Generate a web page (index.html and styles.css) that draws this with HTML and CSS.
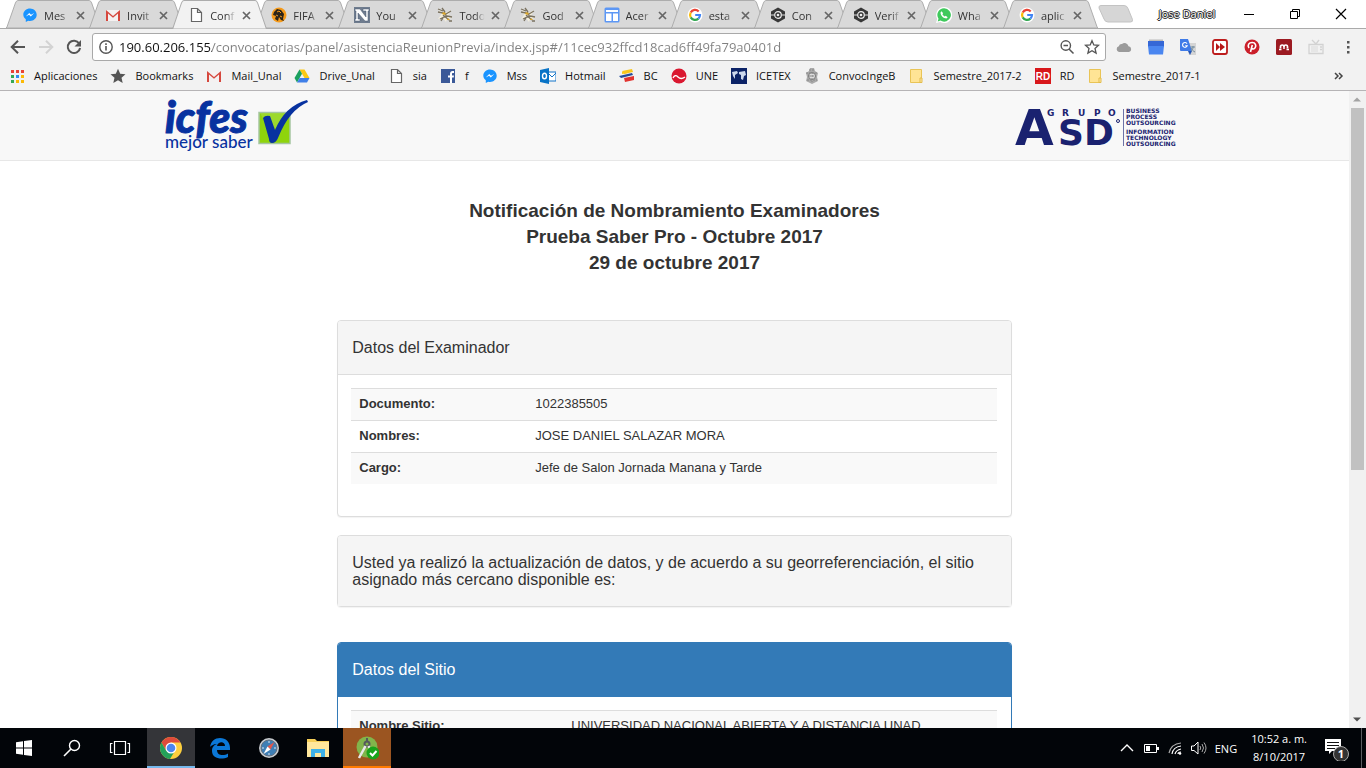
FILE: index.html
```html
<!DOCTYPE html>
<html lang="es">
<head>
<meta charset="utf-8">
<title>Notificación de Nombramiento Examinadores</title>
<link rel="stylesheet" href="styles.css">
</head>
<body>
<svg class="defs" aria-hidden="true">
  <symbol id="tab" viewBox="0 0 96 28" preserveAspectRatio="none"><path d="M0 28 L1 27 L9.500 3 Q10.500 .5 12 .5 H84 Q85.500 .5 86.500 3 L95 27 L96 28z"/></symbol>
  <symbol id="x" viewBox="0 0 9 9"><path d="M1 1l7 7M8 1L1 8" stroke="#666" stroke-width="1.700"/></symbol>
  <symbol id="msg" viewBox="0 0 16 16"><path d="M8 1.500C4.300 1.500 1.300 4.200 1.300 7.600c0 1.900 1 3.600 2.500 4.700V15l2.400-1.300c.6.1 1.200.2 1.800.2 3.700 0 6.700-2.800 6.700-6.200S11.700 1.500 8 1.500z" fill="#1a94ff"/><path d="M3.800 9.500L7.200 6l1.800 1.800L12.200 6 8.800 9.600 7 7.800z" fill="#fff"/></symbol>
  <symbol id="gmail" viewBox="0 0 16 16"><path d="M1 3h14v11H1z" fill="#f4f1f1"/><path d="M1 14V3l7 6 7-6v11h-2V6.500l-5 4.300-5-4.300V14z" fill="#d6483e"/></symbol>
  <symbol id="page" viewBox="0 0 16 16"><path d="M3.500 1.500h6l4 4v9h-10zM9.500 1.500v4h4" fill="#fff" stroke="#666" stroke-width="1.200"/></symbol>
  <symbol id="google" viewBox="0 0 16 16"><circle cx="8" cy="8" r="7.500" fill="#fff"/><g fill="none" stroke-width="2.200"><path d="M3.700 5.600A5 5 0 0 1 11.700 4.400" stroke="#ea4335"/><path d="M3.700 5.600a5 5 0 0 0 0 4.800" stroke="#fbbc05"/><path d="M3.700 10.400a5 5 0 0 0 7.700 1.200" stroke="#34a853"/><path d="M11.400 11.600A5 5 0 0 0 13 8H8.200" stroke="#4285f4"/></g></symbol>
  <symbol id="bee" viewBox="0 0 16 16"><path d="M1 1l6 6 7-4-3 6 4 2-5 1-1 3-3-4-5 1 3-4z" fill="#f3eedd"/><path d="M1 2l5 2M1 5l5 1M5 1l3 4M14 4L9 7M6 8l6 5M3 12l6-3M10 9l5 1M7 5l3 5M4 14l2-3M12 14h3" stroke="#7a7260" stroke-width="1.300"/><path d="M6 5l3 1-1 2-3-1zM11 11l2 2h-3z" fill="#d9a62d"/></symbol>
  <symbol id="hex" viewBox="0 0 16 16"><path d="M8 .5l7 4v7l-7 4-7-4v-7z" fill="#383838"/><circle cx="8" cy="8" r="3.300" fill="none" stroke="#eee" stroke-width="1.200"/><circle cx="8" cy="8" r="1.300" fill="#eee"/><path d="M1 8h4M11 8h4" stroke="#ddd"/></symbol>
  <symbol id="folder" viewBox="0 0 16 16"><path d="M2.500 1.500h11v13h-11z" fill="#ffe495" stroke="#e9c456"/><path d="M12 10h2v4.500h-2z" fill="#ffe8a5" stroke="#e2bb4b"/></symbol>
</svg>

<header class="browser">
  <div class="tabstrip">
    <div class="tabs">
      <div class="tab"><svg class="shape"><use href="#tab"/></svg><svg class="ico"><use href="#msg"/></svg><button class="label">Mes</button><button class="close" aria-label="Cerrar"><svg><use href="#x"/></svg></button></div>
      <div class="tab"><svg class="shape"><use href="#tab"/></svg><svg class="ico"><use href="#gmail"/></svg><button class="label">Invit</button><button class="close" aria-label="Cerrar"><svg><use href="#x"/></svg></button></div>
      <div class="tab active"><svg class="shape"><use href="#tab"/></svg><svg class="ico"><use href="#page"/></svg><button class="label">Conf</button><button class="close" aria-label="Cerrar"><svg><use href="#x"/></svg></button></div>
      <div class="tab"><svg class="shape"><use href="#tab"/></svg><svg class="ico" viewBox="0 0 16 16"><circle cx="8" cy="8" r="7.500" fill="#f59b1c"/><path d="M3 5l3-3 4 1 3 4-1 5 1 2-3-1-2-3-1 4-3-2 1-3-3-1z" fill="#2d2418"/><path d="M6 5l2-1 2 2M9 9l2 1M5 8l2 1" stroke="#f59b1c" fill="none"/></svg><button class="label">FIFA</button><button class="close" aria-label="Cerrar"><svg><use href="#x"/></svg></button></div>
      <div class="tab"><svg class="shape"><use href="#tab"/></svg><svg class="ico" viewBox="0 0 16 16"><path d="M0 0h16v16H0z" fill="#6f7c8e"/><path d="M1 2h5l6 8V4H9V2h6v2h-1v10h-3L4 6v6h2v2H1v-2h1V4H1z" fill="#fff" stroke="#4b5870" stroke-width=".5"/></svg><button class="label">You</button><button class="close" aria-label="Cerrar"><svg><use href="#x"/></svg></button></div>
      <div class="tab"><svg class="shape"><use href="#tab"/></svg><svg class="ico"><use href="#bee"/></svg><button class="label">Todo</button><button class="close" aria-label="Cerrar"><svg><use href="#x"/></svg></button></div>
      <div class="tab"><svg class="shape"><use href="#tab"/></svg><svg class="ico"><use href="#bee"/></svg><button class="label">God</button><button class="close" aria-label="Cerrar"><svg><use href="#x"/></svg></button></div>
      <div class="tab"><svg class="shape"><use href="#tab"/></svg><svg class="ico" viewBox="0 0 16 16"><rect x=".5" y=".5" width="15" height="15" rx="1.500" fill="#5c97f5"/><path d="M2 3h12v2H2zM2 6.500h5.500V14H2zM9 6.500h5V14H9z" fill="#fff"/></svg><button class="label">Acer</button><button class="close" aria-label="Cerrar"><svg><use href="#x"/></svg></button></div>
      <div class="tab"><svg class="shape"><use href="#tab"/></svg><svg class="ico"><use href="#google"/></svg><button class="label">esta</button><button class="close" aria-label="Cerrar"><svg><use href="#x"/></svg></button></div>
      <div class="tab"><svg class="shape"><use href="#tab"/></svg><svg class="ico"><use href="#hex"/></svg><button class="label">Con</button><button class="close" aria-label="Cerrar"><svg><use href="#x"/></svg></button></div>
      <div class="tab"><svg class="shape"><use href="#tab"/></svg><svg class="ico"><use href="#hex"/></svg><button class="label">Verif</button><button class="close" aria-label="Cerrar"><svg><use href="#x"/></svg></button></div>
      <div class="tab"><svg class="shape"><use href="#tab"/></svg><svg class="ico" viewBox="0 0 16 16"><path d="M8 0a8 8 0 0 0-6.800 12L0 16l4.200-1.100A8 8 0 1 0 8 0z" fill="#fff"/><path d="M8 1.300a6.700 6.700 0 0 0-5.500 10.400l-.8 2.700 2.800-.8A6.700 6.700 0 1 0 8 1.300z" fill="#3fc95c"/><path d="M5.600 4.200L4.500 5.500c0 3 3 6 6 6l1.200-1.200-2-1.500-1 .8C7.600 9 7 8.200 6.400 7.200l.7-.9z" fill="#fff"/></svg><button class="label">Wha</button><button class="close" aria-label="Cerrar"><svg><use href="#x"/></svg></button></div>
      <div class="tab"><svg class="shape"><use href="#tab"/></svg><svg class="ico"><use href="#google"/></svg><button class="label">aplic</button><button class="close" aria-label="Cerrar"><svg><use href="#x"/></svg></button></div>
    </div>
    <button class="newtab" aria-label="Nueva pestaña"><svg viewBox="0 0 36 18"><path d="M3 .5h23q3 0 4 3l4.500 11q.5 2.500-2 2.500H10q-3 0-4-3L1 3Q.5.500 3 .5z" fill="#d6d6d6" stroke="#c3c3c3"/></svg></button>
    <div class="window">
      <button class="profile">Jose Daniel</button>
      <button aria-label="Minimizar"><svg viewBox="0 0 12 12"><path d="M1 6.500h10" stroke="#000"/></svg></button>
      <button aria-label="Restaurar"><svg viewBox="0 0 12 12"><path d="M1.500 3.500h7v7h-7zM3.500 3.500v-2h7v7h-2" fill="none" stroke="#000"/></svg></button>
      <button aria-label="Cerrar ventana"><svg viewBox="0 0 12 12"><path d="M1 1l10 10M11 1L1 11" stroke="#000" stroke-width="1.200"/></svg></button>
    </div>
  </div>

  <div class="toolbar">
    <button aria-label="Atrás"><svg viewBox="0 0 16 16"><path d="M15 8H2M8 1.700L1.700 8 8 14.300" fill="none" stroke="#555" stroke-width="2"/></svg></button>
    <button aria-label="Adelante"><svg viewBox="0 0 16 16"><path d="M1 8h13M8 1.700L14.300 8 8 14.300" fill="none" stroke="#d3d3d3" stroke-width="2"/></svg></button>
    <button aria-label="Recargar"><svg viewBox="0 0 16 16"><path d="M13.200 4.500A6.200 6.200 0 1 0 14.100 9" fill="none" stroke="#555" stroke-width="2"/><path d="M15 1v6.500H8.500z" fill="#555"/></svg></button>
    <div class="omnibox">
      <svg viewBox="0 0 16 16"><circle cx="8" cy="8" r="6.200" fill="none" stroke="#555" stroke-width="1.400"/><path d="M8 7v4.500M8 4.300v1.600" stroke="#555" stroke-width="1.600"/></svg>
      <input type="text" aria-label="Dirección" value="190.60.206.155/convocatorias/panel/asistenciaReunionPrevia/index.jsp#/11cec932ffcd18cad6ff49fa79a0401d">
      <button aria-label="Zoom"><svg viewBox="0 0 16 16"><circle cx="6.800" cy="6.500" r="4.700" fill="none" stroke="#555" stroke-width="1.400"/><path d="M4.500 6.500H9M10 10l4.500 4.500" stroke="#555" stroke-width="1.500"/></svg></button>
      <button aria-label="Favorito"><svg viewBox="0 0 16 16"><path d="M8 1.700l1.800 4.200 4.700.4L11 9.400l1.100 4.700L8 11.700l-4.100 2.400L5 9.400 1.500 6.300l4.700-.4z" fill="none" stroke="#555" stroke-width="1.300"/></svg></button>
    </div>
    <div class="extensions">
      <button aria-label="Nube"><svg viewBox="0 0 16 16"><path d="M3 13a3 3 0 0 1-.2-5.800A3 3 0 0 1 6 5a4 4 0 0 1 6.500 2.300A2.900 2.900 0 0 1 13 13z" fill="#9b9b9b"/></svg></button>
      <button aria-label="Tareas"><svg viewBox="0 0 16 16"><path d="M1 .5h14v2H1z" fill="#bbb"/><path d="M0 2h16v6H0z" fill="#3567d6"/><path d="M0 7h16l-1 8.500H1z" fill="#4a86f0"/></svg></button>
      <button aria-label="Traductor"><svg viewBox="0 0 16 16"><path d="M6 4h10v12H9z" fill="#d5d5d5"/><path d="M0 0h8l4 12H1q-1 0-1-1z" fill="#3f7be8"/><path d="M8 12h4l-2 4z" fill="#2455b5"/><path d="M7 4.600a2.400 2.400 0 1 0 .2 2.200H5.200" fill="none" stroke="#fff" stroke-width="1.100"/><path d="M10.500 8H15M13 7v1c0 2-1 3-2 4M11 9c1 2 2 3 4 4" fill="none" stroke="#718b9d"/></svg></button>
      <button aria-label="Velocidad"><svg viewBox="0 0 16 16"><rect x="1" y="1" width="14" height="14" rx="2" fill="#fff" stroke="#bd1d1d" stroke-width="1.800"/><path d="M4 4l4 4-4 4zM8 4l5 4-5 4z" fill="#b61717"/></svg></button>
      <button aria-label="Pinterest"><svg viewBox="0 0 16 16"><circle cx="8" cy="8" r="7.500" fill="#cb1f2a"/><path d="M5 9C3 6 5 3.500 8.200 3.500c3.300 0 4.300 3 3 5.200-1 1.800-3 1.600-3.300.4M8.300 6l-1.800 7" fill="none" stroke="#fff" stroke-width="1.600"/></svg></button>
      <button aria-label="Mendeley"><svg viewBox="0 0 16 16"><rect width="16" height="16" rx="1.500" fill="#9c1b22"/><path d="M4.500 9.500V8q0-2 1.700-2T8 8q0-2 1.800-2t1.700 2v1.500" fill="none" stroke="#fff" stroke-width="1.700"/><path d="M3 10.500h2.500M7 9h2M10.500 10.500H13" stroke="#fff" stroke-width="1.600"/></svg></button>
      <button aria-label="TV"><svg viewBox="0 0 16 16"><path d="M1 5.500h14v9H1zM4 1l4 4 3-4" fill="none" stroke="#d2d2d2" stroke-width="1.300"/><path d="M3 7h7v6H3z" fill="#e6e6e6"/><path d="M12 8h2M12 10.500h2" stroke="#d2d2d2" stroke-width="1.500"/></svg></button>
      <button aria-label="Menú"><svg viewBox="0 0 16 16"><path d="M7 2h2.500v2.500H7zM7 7h2.500v2.500H7zM7 12h2.500v2.500H7z" fill="#555"/></svg></button>
    </div>
  </div>

  <nav class="bookmarks">
    <a href="#"><svg viewBox="0 0 16 16"><path d="M2 2h3v3H2zM7 2h3v3H7zM12 2h3v3h-3z" fill="#ea4335"/><path d="M2 7h3v3H2zM2 12h3v3H2z" fill="#34a853"/><path d="M7 7h3v3H7z" fill="#2f8cf0"/><path d="M12 7h3v3h-3zM7 12h3v3H7zM12 12h3v3h-3z" fill="#fbb905"/></svg>Aplicaciones</a>
    <a href="#"><svg viewBox="0 0 16 16"><path d="M8 .8l2.200 4.900 5.300.5-4 3.500 1.200 5.300L8 12.200 3.300 15l1.200-5.300-4-3.500 5.300-.5z" fill="#555"/></svg>Bookmarks</a>
    <a href="#"><svg><use href="#gmail"/></svg>Mail_Unal</a>
    <a href="#"><svg viewBox="0 0 16 16"><path d="M5.500 1.500h5l5 8.500h-5z" fill="#fbc814"/><path d="M5.500 1.500L.5 10 3 14.500l5-8.700z" fill="#1ba05f"/><path d="M3 14.500L5.600 10h9.900L13 14.500z" fill="#3f7fe8"/></svg>Drive_Unal</a>
    <a href="#"><svg><use href="#page"/></svg>sia</a>
    <a href="#"><svg viewBox="0 0 16 16"><path d="M1 1h14v14H1z" fill="#3b5998"/><path d="M10 15V9.500H8v-2h2V6c0-2 1-3 2.500-3H14v2h-1c-.8 0-1 .4-1 1v1.500h2l-.3 2H12V15z" fill="#fff"/></svg>f</a>
    <a href="#"><svg><use href="#msg"/></svg>Mss</a>
    <a href="#"><svg viewBox="0 0 16 16"><path d="M8 4h8v9H8z" fill="#fff" stroke="#1173c7"/><path d="M8 5l4 4 4-4" fill="none" stroke="#1173c7"/><path d="M0 2l9-2v16l-9-2z" fill="#0873c6"/><ellipse cx="4.500" cy="8" rx="2" ry="2.800" fill="none" stroke="#fff" stroke-width="1.400"/></svg>Hotmail</a>
    <a href="#"><svg viewBox="0 0 16 16"><path d="M3 3l10-2 1 3-9 2z" fill="#f8c61d"/><path d="M0 8l13-3 1 2L2 10z" fill="#244c9b"/><path d="M5 10l10-2v4L6 14z" fill="#e23430"/><path d="M3 4l6-1v2l-6 1z" fill="#f8c61d"/></svg>BC</a>
    <a href="#"><svg viewBox="0 0 16 16"><circle cx="8" cy="8" r="7.500" fill="#da1830"/><path d="M2 10q2-4 5-1t7 0" stroke="#fff" fill="none" stroke-width="1.300"/></svg>UNE</a>
    <a href="#"><svg viewBox="0 0 16 16"><path d="M0 0h16v16H0z" fill="#0c2367"/><path d="M1 4l5-1 1 2-3 2v4L2 8zM8 4l6-1 1 4-2 1-1 4-2-1V7L8 6z" fill="#ccd8ed"/></svg>ICETEX</a>
    <a href="#"><svg viewBox="0 0 16 16"><path d="M5 3l1-3h4l1 3 3 2-1 4 1 4-6 3-6-3 1-4-1-4z" fill="#aaa"/><circle cx="8" cy="8" r="3.500" fill="#ddd" stroke="#777"/><path d="M2 5h12M3 12h10M8 4v10M5 8h6M5 2h6" stroke="#888" stroke-dasharray="2 1"/></svg>ConvocIngeB</a>
    <a href="#"><svg><use href="#folder"/></svg>Semestre_2017-2</a>
    <a href="#"><svg viewBox="0 0 16 16"><path d="M0 0h16v16H0z" fill="#d8171b"/><text class="rd" x="8" y="12" text-anchor="middle">RD</text></svg>RD</a>
    <a href="#"><svg><use href="#folder"/></svg>Semestre_2017-1</a>
    <button class="more" aria-label="Más marcadores"><svg viewBox="0 0 16 16"><path d="M4 5l3 3-3 3M8 5l3 3-3 3" fill="none" stroke="#444" stroke-width="1.500"/></svg></button>
  </nav>
</header>

<div class="viewport">
  <div class="content">
    <header class="brandbar">
      <svg class="icfes" viewBox="0 0 144 56" role="img" aria-label="icfes mejor saber">
        <text class="icfes-name" x="0" y="35">icfes</text>
        <text class="icfes-sub" x="0" y="50">mejor saber</text>
        <path d="M94 14.500h31v31H94z" fill="#8fd40c" stroke="#a5c5a0" stroke-width="1.500"/>
        <path d="M95 15h29l-10 17-14-8z" fill="#aade4e" opacity=".5"/>
        <path d="M98 20q2-3 7-2l5 14Q120 8 142 2l1 2Q124 12 113 40q-2 5-6 5-3 0-3-4z" fill="#0832a0"/>
      </svg>
      <svg class="asd" viewBox="0 0 162 42" role="img" aria-label="Grupo ASD">
        <text class="grupo" x="32 47 63 79 93" y="11">GRUPO</text>
        <text class="asd-a" x="0" y="40">A</text>
        <text class="asd-sd" x="43" y="40">SD</text>
        <circle cx="103" cy="16" r="1.500" fill="none" stroke="#1a2270"/>
        <path d="M108.500 4v37" stroke="#6c72a8"/>
        <g class="asd-sub"><text x="111" y="8">BUSINESS</text><text x="111" y="14">PROCESS</text><text x="111" y="20">OUTSOURCING</text><text x="111" y="29">INFORMATION</text><text x="111" y="35">TECHNOLOGY</text><text x="111" y="41">OUTSOURCING</text></g>
      </svg>
    </header>
    <main>
      <h1>Notificación de Nombramiento Examinadores<br>Prueba Saber Pro - Octubre 2017<br>29 de octubre 2017</h1>
      <section class="panel">
        <h2>Datos del Examinador</h2>
        <div class="panel-body">
          <table class="examiner">
            <tr><th scope="row">Documento:</th><td>1022385505</td></tr>
            <tr><th scope="row">Nombres:</th><td>JOSE DANIEL SALAZAR MORA</td></tr>
            <tr><th scope="row">Cargo:</th><td>Jefe de Salon Jornada Manana y Tarde</td></tr>
          </table>
        </div>
      </section>
      <section class="panel notice">
        <h2>Usted ya realizó la actualización de datos, y de acuerdo a su georreferenciación, el sitio asignado más cercano disponible es:</h2>
      </section>
      <section class="panel primary">
        <h2>Datos del Sitio</h2>
        <div class="panel-body">
          <table class="site">
            <tr><th scope="row">Nombre Sitio:</th><td>UNIVERSIDAD NACIONAL ABIERTA Y A DISTANCIA UNAD</td></tr>
          </table>
        </div>
      </section>
    </main>
  </div>
  <div class="scrollbar" aria-hidden="true">
    <svg viewBox="0 0 16 16"><path d="M4 10l4-4 4 4z" fill="#a3a3a3"/></svg>
    <div class="track"><div class="thumb"></div></div>
    <svg viewBox="0 0 16 16"><path d="M4 6l4 4 4-4z" fill="#505050"/></svg>
  </div>
</div>

<footer class="taskbar">
  <div class="apps">
    <button aria-label="Inicio"><svg viewBox="0 0 24 24"><path d="M4 6.200l7-1V11.500H4zM12 5l8-1v7.500h-8zM4 12.500h7v6.300l-7-1zM12 12.500h8V20l-8-1z" fill="#fff"/></svg></button>
    <button aria-label="Buscar"><svg viewBox="0 0 24 24"><circle cx="14.500" cy="9.500" r="5" fill="none" stroke="#fff" stroke-width="1.400"/><path d="M11 13l-7 7" stroke="#fff" stroke-width="1.600"/></svg></button>
    <button aria-label="Vista de tareas"><svg viewBox="0 0 24 24"><path d="M6.500 5.500h11v13h-11zM4.500 7.500h-2v9h2M19.500 7.500h2v9h-2" fill="none" stroke="#fff" stroke-width="1.200"/></svg></button>
  </div>
  <div class="apps pinned">
    <button class="running" aria-label="Chrome"><svg viewBox="0 0 24 24"><circle cx="12" cy="12" r="11" fill="#fdcf3e"/><path d="M2.500 6.500A11 11 0 0 1 21.500 6.500H12L7.200 14.700z" fill="#df4b3b"/><path d="M2.500 6.500a11 11 0 0 0 8.500 16.500l5-8.200H7.200z" fill="#23a05a"/><circle cx="12" cy="12" r="5.500" fill="#fff"/><circle cx="12" cy="12" r="4.300" fill="#4c86ef"/></svg></button>
    <button aria-label="Edge"><svg viewBox="0 0 24 24"><path d="M2 11C3 5 7 2 12 2c6 0 10 4 10 10v2H9c0 6 7 6 11 3.500V21c-6 3-16 2-16-6 0-4 2-6 5-7-4 0-6 2-7 3zm7-1h8c0-5-7-5-8 0z" fill="#0b78d7"/></svg></button>
    <button aria-label="Safari"><svg viewBox="0 0 24 24"><circle cx="12" cy="12" r="10" fill="#c8ccd0"/><circle cx="12" cy="12" r="8" fill="#3f7fb5" stroke="#65717e"/><path d="M12 5v2M12 17v2M5 12h2M17 12h2" stroke="#dce9f5"/><path d="M17.500 6L10.500 10.500l3 3z" fill="#e4574b"/><path d="M6.500 18l4-7.500 3 3z" fill="#fff"/></svg></button>
    <button aria-label="Explorador"><svg viewBox="0 0 24 24"><path d="M1 3h8l2 2h12v16H1z" fill="#f6cf58"/><path d="M1 6h22v15H1z" fill="#ffe79c"/><path d="M5 13h14v8h-4v-4H9v4H5z" fill="#3eb1e7"/></svg></button>
    <button class="alert" aria-label="Android Studio"><svg viewBox="0 0 24 24"><circle cx="12" cy="11" r="10.500" fill="#82b54b"/><circle cx="12" cy="8" r="2.500" fill="none" stroke="#55595c" stroke-width="2"/><path d="M12 2v4" stroke="#55595c" stroke-width="2"/><path d="M10.500 10L4 22M13.500 10l5 10" stroke="#e8e8e8" stroke-width="2.500"/><circle cx="18" cy="17" r="6.500" fill="#19a31b"/><path d="M15 17l2.500 2.500 4-4.500" fill="none" stroke="#fff" stroke-width="2"/></svg></button>
  </div>
  <div class="tray">
    <svg viewBox="0 0 16 16"><path d="M2 11l6-6 6 6" fill="none" stroke="#fff" stroke-width="1.400"/></svg>
    <svg viewBox="0 0 16 16"><path d="M1.500 4.500h12v8h-12z" fill="none" stroke="#fff"/><path d="M3 6h4v5H3zM14 7h2v3h-2z" fill="#fff"/></svg>
    <svg viewBox="0 0 16 16"><g fill="none" stroke="#fff" stroke-width="1.200"><path d="M2 13Q4 4 14 3" stroke="#aaa"/><path d="M5 14q1-7 9-8M8 14q1-4 6-5M11 14q0-2 3-2"/></g><circle cx="13" cy="13.500" r="1.300" fill="#fff"/></svg>
    <svg viewBox="0 0 16 16"><path d="M.5 6h2.500l4-4v12L3 10.500H.5z" fill="none" stroke="#fff"/><path d="M9 6q1.500 2 0 4M11 4q3 4 0 8M13 2.500q4 5.500 0 11" fill="none" stroke="#aaa"/></svg>
    <span>ENG</span>
    <time class="clock">10:52 a. m.<br>8/10/2017</time>
    <svg class="action" viewBox="0 0 26 26"><path d="M2 4h16v12h-9l-3 3v-3H2z" fill="#fff"/><path d="M4 7.500h12M4 10.500h12M4 13.500h8" stroke="#111"/><circle cx="18" cy="19" r="7.500" fill="#333" stroke="#aaa"/><text class="count" x="18" y="23" text-anchor="middle">1</text></svg>
  </div>
  <button class="desktop" aria-label="Mostrar escritorio"></button>
</footer>
</body>
</html>
```

FILE: styles.css
```css
* { box-sizing: border-box; }
body {
  margin: 0;
  height: 100vh;
  display: flex;
  flex-direction: column;
  overflow: hidden;
  background: #fff;
  color: #333;
  font-family: "Liberation Sans", Arial, sans-serif;
  font-size: 13px;
}
button { border: 0; padding: 0; background: none; font: inherit; color: inherit; }
svg { display: block; flex: none; }
.defs { display: none; }

/* Browser frame */
.browser {
  flex: none;
  background: #f2f2f2;
  border-bottom: 1px solid #b6b4b6;
  font-family: "Open Sans", "Segoe UI", sans-serif;
  font-size: 11px;
  color: #111;
}
.tabstrip {
  height: 29px;
  display: flex;
  background: #fff;
  border-bottom: 1px solid #aaa;
}
.tabs { flex: 1; display: flex; padding-left: 6px; }
.tab {
  position: relative;
  flex: 1 1 0;
  min-width: 0;
  height: 29px;
  margin-right: -12px;
  padding: 1px 16px 0 16px;
  display: flex;
  align-items: center;
}
.tab:last-child { margin-right: 0; }
.tab > * { position: relative; }
.tab .shape {
  position: absolute;
  left: 0;
  top: 0;
  width: 100%;
  height: 28px;
  fill: #d9d9d9;
  stroke: #acacac;
}
.tab.active { z-index: 1; }
.tab.active .shape { fill: #f2f2f2; height: 29px; }
.ico { width: 16px; height: 16px; }
.label {
  flex: 1;
  min-width: 0;
  margin-left: 6px;
  overflow: hidden;
  white-space: nowrap;
  text-align: left;
  color: #333;
  mask-image: linear-gradient(to right, #000 60%, transparent 95%);
}
.close { margin-left: 5px; }
.close svg { width: 9px; height: 9px; }
.newtab { margin-right: 20px; }
.newtab svg { width: 36px; height: 18px; }
.window { display: flex; align-items: center; height: 27px; padding-right: 2px; }
.window button { width: 46px; display: flex; justify-content: center; }
.window svg { width: 12px; height: 12px; }
.window .profile {
  width: 66px;
  margin-right: 6px;
  color: #fff;
  text-shadow: 1px 0 #222, -1px 0 #222, 0 1px #222, 0 -1px #222;
}

.toolbar { display: flex; align-items: center; height: 36px; padding: 0 2px 0 4px; }
.toolbar > button { width: 28px; display: flex; justify-content: center; }
.toolbar svg { width: 16px; height: 16px; }
.omnibox {
  flex: 1;
  height: 28px;
  margin-left: 4px;
  padding: 0 5px;
  display: flex;
  align-items: center;
  background: #fff;
  border: 1px solid #a9a9a9;
  border-radius: 3px;
}
.omnibox input {
  flex: 1;
  min-width: 0;
  height: 24px;
  border: 0;
  padding: 0;
  margin-left: 5px;
  font-family: "Open Sans", "Segoe UI", sans-serif;
  font-size: 13px;
  color: transparent;
  background: linear-gradient(to right, #111 93px, #808080 93px);
  background-clip: text;
}
.omnibox button { margin-left: 9px; }
.extensions { display: flex; margin-left: 2px; }
.extensions button { width: 32px; display: flex; justify-content: center; }

.bookmarks { display: flex; gap: 13px; height: 25px; padding: 0 19px 4px 9px; align-items: center; }
.bookmarks a { display: flex; align-items: center; gap: 9px; color: #111; text-decoration: none; white-space: nowrap; }
.bookmarks svg { width: 16px; height: 16px; }
.more { margin-left: auto; }
.rd { font: bold 10px "Liberation Sans", sans-serif; fill: #fff; }

/* Page */
.viewport { flex: 1; min-height: 0; display: flex; overflow: hidden; }
.content { flex: 1; overflow: hidden; }
.brandbar {
  height: 70px;
  padding: 0 172px 0 165px;
  display: flex;
  align-items: center;
  justify-content: space-between;
  background: #f8f8f8;
  border-bottom: 1px solid #e7e7e7;
}
.icfes { width: 144px; height: 56px; }
.icfes-name { font: italic 900 43px Lato, sans-serif; fill: #0832a0; stroke: #0832a0; stroke-linejoin: round; }
.icfes-sub { font: 500 17px Lato, sans-serif; fill: #0832a0; }
.asd { width: 162px; height: 42px; }
.asd-a { font: bold 50px "DejaVu Sans", sans-serif; fill: #1a2270; }
.asd-sd { font: bold 36px "DejaVu Sans", sans-serif; fill: #1a2270; }
.grupo { font: bold 9px "DejaVu Sans", sans-serif; fill: #1a2270; }
.asd-sub { font: bold 6px "DejaVu Sans", sans-serif; fill: #1a2270; }

main { width: 50%; margin: 0 auto; }
h1 { margin: 0; padding: 37px 0 44px; font-size: 19px; line-height: 26px; text-align: center; }
.panel {
  margin-bottom: 18px;
  border: 1px solid #ddd;
  border-radius: 4px;
  background: #fff;
  box-shadow: 0 1px 1px rgba(0, 0, 0, .05);
}
.panel h2 {
  margin: 0;
  padding: 18px 14px;
  font-size: 16px;
  font-weight: normal;
  line-height: 17px;
  background: #f5f5f5;
  border-bottom: 1px solid #ddd;
  border-radius: 3px 3px 0 0;
}
.panel-body { padding: 13px 14px 32px 13px; }
.notice { margin-bottom: 35px; }
.notice h2 { border-bottom: 0; }
.primary { border-color: #337ab7; }
.primary h2 { color: #fff; background: #337ab7; border-color: #337ab7; }
table { width: 100%; border-collapse: collapse; }
th, td {
  padding: 6px 8px 8px;
  line-height: 17px;
  text-align: left;
  vertical-align: top;
  border-top: 1px solid #ddd;
}
tr:nth-child(odd) { background: #f9f9f9; }
.examiner th { width: 176px; }
.site th { width: 212px; }

.scrollbar { width: 17px; display: flex; flex-direction: column; background: #f1f1f1; }
.scrollbar svg { width: 16px; height: 17px; }
.track { flex: 1; padding: 0 2px; }
.thumb { height: 60%; background: #c1c1c1; }

/* Taskbar */
.taskbar {
  flex: none;
  height: 40px;
  display: flex;
  background: #020509;
  color: #fff;
  font-family: "Open Sans", "Segoe UI", sans-serif;
  font-size: 11px;
}
.apps { display: flex; }
.apps button { width: 48px; display: flex; align-items: center; justify-content: center; }
.apps svg { width: 24px; height: 24px; }
.pinned { gap: 1px; margin-left: 3px; }
.running { background: #343539; box-shadow: inset 0 -2px #76b9ed; }
.alert { background: #9b5521; box-shadow: inset 0 -2px #ff7a00; }
.tray { margin-left: auto; display: flex; align-items: center; gap: 8px; padding-right: 12px; }
.tray svg { width: 16px; height: 16px; }
.tray .action { width: 26px; height: 26px; }
.clock { margin: 0 8px 0 6px; line-height: 18px; text-align: center; }
.count { font: bold 11px "Open Sans", sans-serif; fill: #fff; }
.desktop { width: 5px; border-left: 1px solid #5a5c60; }
```
